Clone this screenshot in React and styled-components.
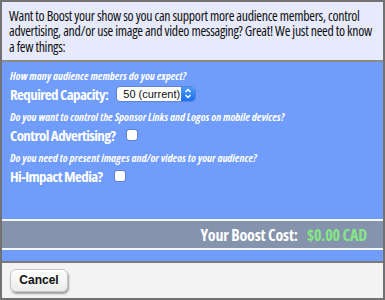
import React from "react";
import styled, { createGlobalStyle } from "styled-components";

const Global = createGlobalStyle`
  html, body { margin: 0; padding: 0; background: #fff; }
  * { box-sizing: border-box; }
`;

const Frame = styled.div`
  width: 385px;
  height: 300px;
  border: 2px solid #727272;
  display: flex;
  flex-direction: column;
  background: #f3f3f3;
  font-family: "Open Sans", sans-serif;
  font-stretch: 75%;
`;

const Intro = styled.div`
  background: #e6eafc;
  border-bottom: 2px solid #8a8a8a;
  padding: 6px 0 5px 7px;
  font-size: 13.8px;
  font-weight: 500;
  letter-spacing: -0.28px;
  line-height: 15.3px;
  color: #111;
  height: 60px;
`;

const Form = styled.div`
  background: #709cfc;
  height: 159px;
  padding: 7px 6px 0 8px;
  border-bottom: 2px solid #f4f6fb;
`;

const Group = styled.div`
  margin-bottom: 6px;
`;

const Question = styled.div`
  font-style: italic;
  font-weight: 700;
  font-size: 11px;
  line-height: 14px;
  color: #fff;
`;

const Row = styled.div`
  display: flex;
  align-items: center;
  gap: ${(p) => p.$gap || 8}px;
  height: 21px;
`;

const Label = styled.span`
  font-size: 15px;
  font-weight: 700;
  letter-spacing: -0.6px;
  color: #fff;
`;

const Select = styled.div`
  display: flex;
  align-items: stretch;
  width: 78px;
  height: 14px;
  background: #fff;
  border-radius: 3px;
  overflow: hidden;
  font-family: "Liberation Sans", Arial, sans-serif;
  font-stretch: normal;
  font-size: 11px;
  box-shadow: 0 0 0 0.5px rgba(0,0,0,0.3);
`;

const SelectText = styled.span`
  flex: 1;
  padding-left: 6px;
  line-height: 14px;
  color: #111;
`;

const Stepper = styled.span`
  width: 14px;
  background: linear-gradient(#4d9bf8, #1c6ff0);
  display: flex;
  align-items: center;
  justify-content: center;
`;

const Check = styled.span`
  width: 10px;
  height: 10px;
  border-radius: 2px;
  background: #fff;
  box-shadow: 0 0 0 0.5px rgba(0,0,0,0.35);
`;

const CostBar = styled.div`
  background: #8593ad;
  height: 29px;
  border-bottom: 2px solid #f4f6fb;
  display: flex;
  align-items: center;
  justify-content: flex-end;
  gap: 9px;
  padding-right: 16px;
  font-size: 16px;
  font-weight: 700;
  letter-spacing: -0.2px;
`;

const CostLabel = styled.span`
  color: #fff;
`;

const CostValue = styled.span`
  color: #84e884;
`;

const Strip = styled.div`
  background: #709cfc;
  height: 13px;
  border-bottom: 2px solid #7a7a7a;
`;

const Footer = styled.div`
  flex: 1;
  background: #f3f3f3;
  padding: 4px 0 0 8px;
`;

const Button = styled.button`
  width: 58px;
  height: 23px;
  border: 1px solid #c4c4c4;
  border-radius: 6px;
  background: linear-gradient(#fefefe, #ececec);
  box-shadow: 1px 2px 2px rgba(0,0,0,0.35);
  font-family: "Liberation Sans", Arial, sans-serif;
  font-weight: bold;
  font-size: 12px;
  color: #111;
  padding: 0;
`;

export default function App() {
  return (
    <>
      <Global />
      <Frame>
        <Intro>
          Want to Boost your show so you can support more audience members, control
          advertising, and/or use image and video messaging? Great! We just need to know
          <br />
          a few things:
        </Intro>
        <Form>
          <Group>
            <Question>How many audience members do you expect?</Question>
            <Row $gap={9}>
              <Label>Required Capacity:</Label>
              <Select>
                <SelectText>50 (current)</SelectText>
                <Stepper>
                  <svg width="8" height="11" viewBox="0 0 8 11">
                    <path d="M1.5 4 L4 1.5 L6.5 4 M1.5 7 L4 9.5 L6.5 7" fill="none" stroke="#fff" strokeWidth="1.4" />
                  </svg>
                </Stepper>
              </Select>
            </Row>
          </Group>
          <Group>
            <Question>Do you want to control the Sponsor Links and Logos on mobile devices?</Question>
            <Row $gap={12}>
              <Label>Control Advertising?</Label>
              <Check />
            </Row>
          </Group>
          <Group>
            <Question>Do you need to present images and/or videos to your audience?</Question>
            <Row $gap={12}>
              <Label>Hi-Impact Media?</Label>
              <Check />
            </Row>
          </Group>
        </Form>
        <CostBar>
          <CostLabel>Your Boost Cost:</CostLabel>
          <CostValue>$0.00 CAD</CostValue>
        </CostBar>
        <Strip />
        <Footer>
          <Button>Cancel</Button>
        </Footer>
      </Frame>
    </>
  );
}
